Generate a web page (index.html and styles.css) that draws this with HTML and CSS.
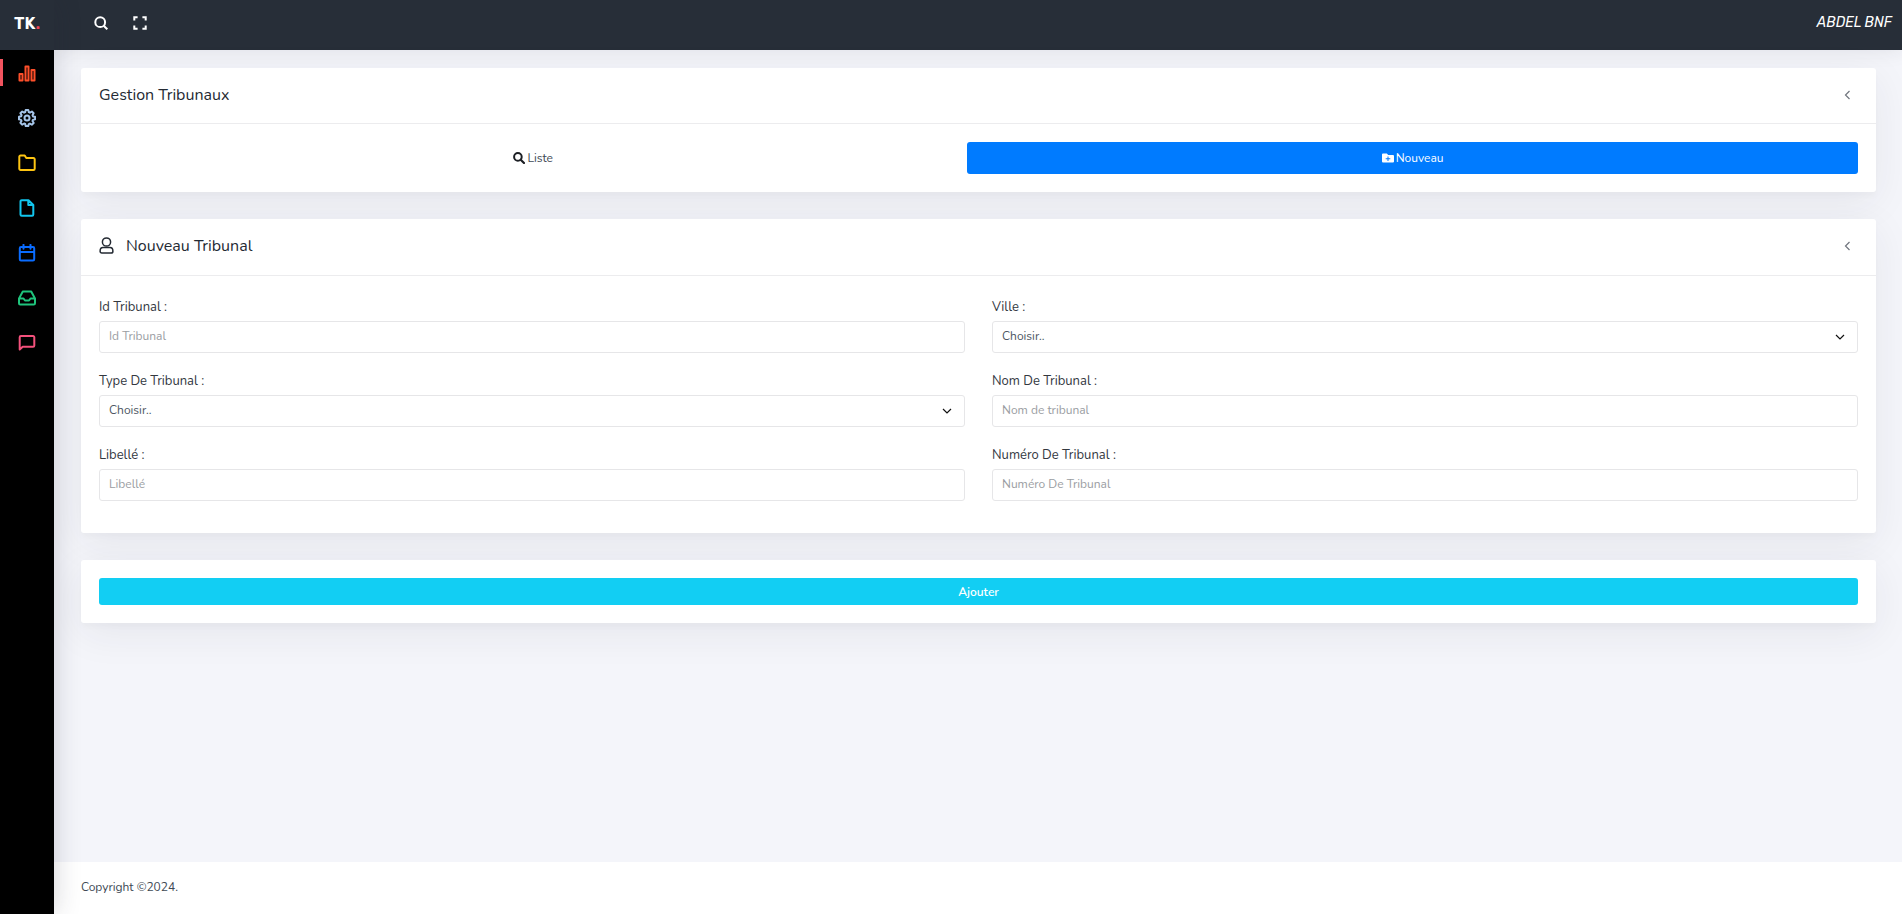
FILE: index.html
```html
<!DOCTYPE html>
<html lang="fr">
<head>
<meta charset="utf-8">
<meta name="viewport" content="width=device-width, initial-scale=1">
<title>Gestion Tribunaux</title>
<link rel="stylesheet" href="styles.css">
</head>
<body>
<div class="layout">
  <aside class="sidebar">
    <a class="brand" href="#">TK<span class="brand-dot">.</span></a>
    <nav class="menu" aria-label="Menu principal">
      <a class="menu-link is-active orange" href="#" aria-label="Tableau de bord">
        <svg class="icon" viewBox="0 0 18 18"><path d="M1.500 10h3v6.500h-3zM7.500 2.500h3v14h-3zM13.500 6h3v10.500h-3z"/></svg>
      </a>
      <a class="menu-link steel" href="#" aria-label="Paramètres">
        <svg class="icon" viewBox="0 0 18 18"><circle cx="9" cy="9" r="2.500"/><path d="M7.700 1h2.600l.5 2.200 1.100.5 2-1.200 1.700 1.800-1.100 1.900.5 1.200 2.100.4v2.500l-2.200.6-.4 1.100 1.200 2-1.900 1.700-1.900-1.100-1.100.5-.5 2H7.700l-.5-2.100-1.100-.5-2 1.200-1.700-1.900 1.100-1.900L3 10.900l-2-.5V7.700l2.100-.4.5-1.200-1.200-1.900 1.800-1.700 1.900 1.200 1.100-.5z"/></svg>
      </a>
      <a class="menu-link yellow" href="#" aria-label="Dossiers">
        <svg class="icon" viewBox="0 0 18 18"><path d="M2.500 1.500h4.200l1.600 2.500h7.200a1.200 1.200 0 0 1 1.200 1.200v9.600a1.200 1.200 0 0 1-1.200 1.200h-13a1.200 1.200 0 0 1-1.200-1.200V2.700a1.200 1.200 0 0 1 1.200-1.200z"/></svg>
      </a>
      <a class="menu-link cyan" href="#" aria-label="Fichiers">
        <svg class="icon" viewBox="0 0 18 18"><path d="M3.700 1.200h6.800l4.800 4.800v9.600a1.200 1.200 0 0 1-1.200 1.200H3.700a1.200 1.200 0 0 1-1.200-1.200V2.400a1.200 1.200 0 0 1 1.200-1.200zM10.300 1.500V6h4.600"/></svg>
      </a>
      <a class="menu-link blue" href="#" aria-label="Agenda">
        <svg class="icon" viewBox="0 0 18 18"><path d="M3 3h12a1.200 1.200 0 0 1 1.200 1.200v11a1.200 1.200 0 0 1-1.200 1.200H3a1.200 1.200 0 0 1-1.200-1.200v-11A1.200 1.200 0 0 1 3 3zM2 8h14M5.500 .800v4M12.500 .800v4"/></svg>
      </a>
      <a class="menu-link green" href="#" aria-label="Réception">
        <svg class="icon" viewBox="0 0 18 18"><path d="M1 9.500h4.500l1.500 2h4l1.500-2H17M4.800 2.500h8.400L17 9.500v4.800a1.200 1.200 0 0 1-1.200 1.200H2.200A1.200 1.200 0 0 1 1 14.300V9.500z"/></svg>
      </a>
      <a class="menu-link pink" href="#" aria-label="Messages">
        <svg class="icon" viewBox="0 0 18 18"><path d="M2.900 2h12.200a1.200 1.200 0 0 1 1.200 1.200v8.300a1.200 1.200 0 0 1-1.200 1.200H4.700l-3 2.800V3.200A1.200 1.200 0 0 1 2.900 2z"/></svg>
      </a>
    </nav>
  </aside>

  <div class="page">
    <header class="topbar">
      <div class="tools">
        <button class="tool" type="button" aria-label="Rechercher">
          <svg class="tool-icon" viewBox="0 0 14 14"><circle cx="6.200" cy="6.200" r="4.900"/><path d="M9.700 9.700l3.600 3.600"/></svg>
        </button>
        <button class="tool" type="button" aria-label="Plein écran">
          <svg class="tool-icon" viewBox="0 0 14 14"><path d="M1.300 4.600V1.300h3.300M9.400 1.300h3.300v3.300M12.700 9.400v3.300H9.400M4.600 12.700H1.300V9.400"/></svg>
        </button>
      </div>
      <a class="user" href="#">ABDEL BNF</a>
    </header>

    <main class="content">
      <section class="card">
        <div class="card-head">
          <h1 class="card-title">Gestion Tribunaux</h1>
          <button class="collapse" type="button" aria-label="Réduire">
            <svg class="chevron" viewBox="0 0 10 10"><path d="M6.500 1L2.500 5l4 4"/></svg>
          </button>
        </div>
        <div class="card-body">
          <nav class="tabs" aria-label="Tribunaux">
            <a class="tab" href="#">
              <svg class="tab-icon dark" viewBox="0 0 12 12"><circle cx="4.900" cy="4.900" r="3.800" fill="none" stroke="currentColor" stroke-width="2"/><path d="M7.700 7.700l3.300 3.300" stroke="currentColor" stroke-width="2.200" stroke-linecap="round"/></svg>
              <span>Liste</span>
            </a>
            <a class="tab is-current" href="#" aria-current="page">
              <svg class="tab-icon" viewBox="0 0 12 12"><path fill="currentColor" fill-rule="evenodd" d="M1 1.500h3.800L6.200 3H11a1 1 0 0 1 1 1v5.500a1 1 0 0 1-1 1H1a1 1 0 0 1-1-1v-7a1 1 0 0 1 1-1zM5.500 4.500v1.700H3.700v1h1.800V9h1V7.200h1.800v-1H6.500V4.500z"/></svg>
              <span>Nouveau</span>
            </a>
          </nav>
        </div>
      </section>

      <form class="form">
        <section class="card">
          <div class="card-head with-icon">
            <h2 class="card-title">
              <svg class="title-icon" viewBox="0 0 15 18"><circle cx="7.500" cy="5" r="4.100"/><path d="M4 10.600h7c1.700 0 2.900 1.500 2.900 3.600 0 1.200-.7 1.900-1.700 1.900H2.800c-1 0-1.700-.7-1.700-1.900 0-2.100 1.200-3.600 2.900-3.600z"/></svg>
              <span>Nouveau Tribunal</span>
            </h2>
            <button class="collapse" type="button" aria-label="Réduire">
              <svg class="chevron" viewBox="0 0 10 10"><path d="M6.500 1L2.500 5l4 4"/></svg>
            </button>
          </div>
          <div class="card-body fields">
            <div class="field">
              <label class="label" for="id">Id Tribunal :</label>
              <input class="control" id="id" type="text" placeholder="Id Tribunal">
            </div>
            <div class="field">
              <label class="label" for="ville">Ville :</label>
              <div class="select">
                <select class="control" id="ville"><option>Choisir..</option></select>
                <svg class="caret" viewBox="0 0 10 6"><path d="M1 1l4 4 4-4"/></svg>
              </div>
            </div>
            <div class="field">
              <label class="label" for="type">Type De Tribunal :</label>
              <div class="select">
                <select class="control" id="type"><option>Choisir..</option></select>
                <svg class="caret" viewBox="0 0 10 6"><path d="M1 1l4 4 4-4"/></svg>
              </div>
            </div>
            <div class="field">
              <label class="label" for="nom">Nom De Tribunal :</label>
              <input class="control" id="nom" type="text" placeholder="Nom de tribunal">
            </div>
            <div class="field">
              <label class="label" for="libelle">Libellé :</label>
              <input class="control" id="libelle" type="text" placeholder="Libellé">
            </div>
            <div class="field">
              <label class="label" for="numero">Numéro De Tribunal :</label>
              <input class="control" id="numero" type="text" placeholder="Numéro De Tribunal">
            </div>
          </div>
        </section>

        <section class="card">
          <div class="card-body">
            <button class="submit" type="submit">Ajouter</button>
          </div>
        </section>
      </form>
    </main>

    <footer class="footer">Copyright ©2024.</footer>
  </div>
</div>
</body>
</html>
```
FILE: styles.css
```css
* {
  box-sizing: border-box;
}

body {
  margin: 0;
  background: #f4f5fa;
  color: #3e4954;
  font-family: Nunito, "Open Sans", sans-serif;
  font-size: 12px;
}

a {
  color: inherit;
  text-decoration: none;
}

button {
  padding: 0;
  border: 0;
  background: none;
  color: inherit;
  font: inherit;
  cursor: pointer;
}

.layout {
  display: flex;
  min-height: 100vh;
}

/* Sidebar */
.sidebar {
  position: relative;
  z-index: 2;
  flex: none;
  width: 54px;
  background: #000;
  box-shadow: 0 0 28px rgba(40, 42, 53, 0.2);
}

.brand {
  display: block;
  height: 50px;
  padding-left: 14px;
  background: #272e38;
  color: #fff;
  font: 600 17px/46px Rubik, Inter, sans-serif;
}

.brand-dot {
  color: #f44455;
}

.menu-link {
  display: flex;
  align-items: center;
  justify-content: center;
  height: 45px;
}

.menu-link.is-active {
  background: linear-gradient(#f2545f, #f2545f) left center / 3px 27px no-repeat;
}

.icon {
  width: 18px;
  height: 18px;
  fill: none;
  stroke: currentColor;
  stroke-width: 2;
  stroke-linejoin: round;
  stroke-linecap: round;
}

.orange { color: #fd4f2a; }
.steel { color: #a5c4e8; }
.yellow { color: #fdc412; }
.cyan { color: #12c6ee; }
.blue { color: #0a6cff; }
.green { color: #1fc47c; }
.pink { color: #f4517c; }

/* Top bar */
.page {
  display: flex;
  flex: 1;
  flex-direction: column;
  min-width: 0;
}

.topbar {
  display: flex;
  align-items: center;
  justify-content: space-between;
  height: 50px;
  padding: 0 10px 4px 40px;
  background: #272e38;
  color: #fff;
  box-shadow: 0 0 20px rgba(40, 42, 53, 0.1);
}

.tools {
  display: flex;
  gap: 25px;
}

.tool {
  display: flex;
}

.tool-icon {
  width: 14px;
  height: 14px;
  fill: none;
  stroke: currentColor;
  stroke-width: 2;
}

.user {
  font: italic 400 14px/20px Rubik, Inter, sans-serif;
}

/* Cards */
.content,
.form {
  display: flex;
  flex-direction: column;
  gap: 27px;
}

.content {
  flex: 1;
  padding: 18px 26px 27px 27px;
}

.card {
  border-radius: 3px;
  background: #fff;
  box-shadow: 0 10px 40px rgba(40, 42, 53, 0.07), 0 5px 5px rgba(40, 42, 53, 0.02);
}

.card-head {
  display: flex;
  align-items: center;
  justify-content: space-between;
  height: 56px;
  padding: 0 18px 2px;
  border-bottom: 1px solid #ececee;
}

.card-head.with-icon {
  height: 57px;
}

.card-title {
  display: flex;
  align-items: center;
  gap: 12px;
  margin: 0;
  color: #242a33;
  font-size: 16px;
  font-weight: 400;
  line-height: 24px;
}

.title-icon {
  width: 15px;
  height: 18px;
  fill: none;
  stroke: currentColor;
  stroke-width: 1.5;
}

.collapse {
  display: flex;
  padding: 6px 5px;
}

.chevron {
  width: 10px;
  height: 10px;
  fill: none;
  stroke: #70757e;
  stroke-width: 1.2;
}

.card-body {
  padding: 18px;
}

/* Tabs */
.tabs {
  display: flex;
}

.tab {
  display: flex;
  flex: 1 1 auto;
  align-items: center;
  justify-content: center;
  gap: 2px;
  height: 32px;
  border-radius: 3px;
  font-size: 12px;
}

.tab.is-current {
  background: #007bff;
  color: #fff;
}

.tab-icon {
  width: 12px;
  height: 12px;
}

.dark {
  color: #1c1f24;
}

/* Form */
.fields {
  display: grid;
  grid-template-columns: 1fr 1fr;
  gap: 15px 27px;
  padding-bottom: 32px;
}

.label {
  display: block;
  color: #33383f;
  font-size: 13px;
  line-height: 27px;
}

.control {
  display: block;
  width: 100%;
  height: 32px;
  padding: 0 9px 2px;
  border: 1px solid #e6e6e8;
  border-radius: 3px;
  background: #fff;
  color: #4d5663;
  font-family: inherit;
  font-size: 12px;
  appearance: none;
}

.control::placeholder {
  color: #9a9da2;
  opacity: 1;
}

.select {
  position: relative;
}

.caret {
  position: absolute;
  top: 13px;
  right: 13px;
  width: 10px;
  height: 6px;
  fill: none;
  stroke: #111;
  stroke-width: 1.2;
  pointer-events: none;
}

.submit {
  display: block;
  width: 100%;
  height: 27px;
  border-radius: 3px;
  background: #12cef3;
  color: #fff;
  font-size: 12px;
  font-weight: 600;
}

.footer {
  padding: 15px 27px 17px;
  background: #fff;
  font-size: 12px;
  line-height: 20px;
}
```
